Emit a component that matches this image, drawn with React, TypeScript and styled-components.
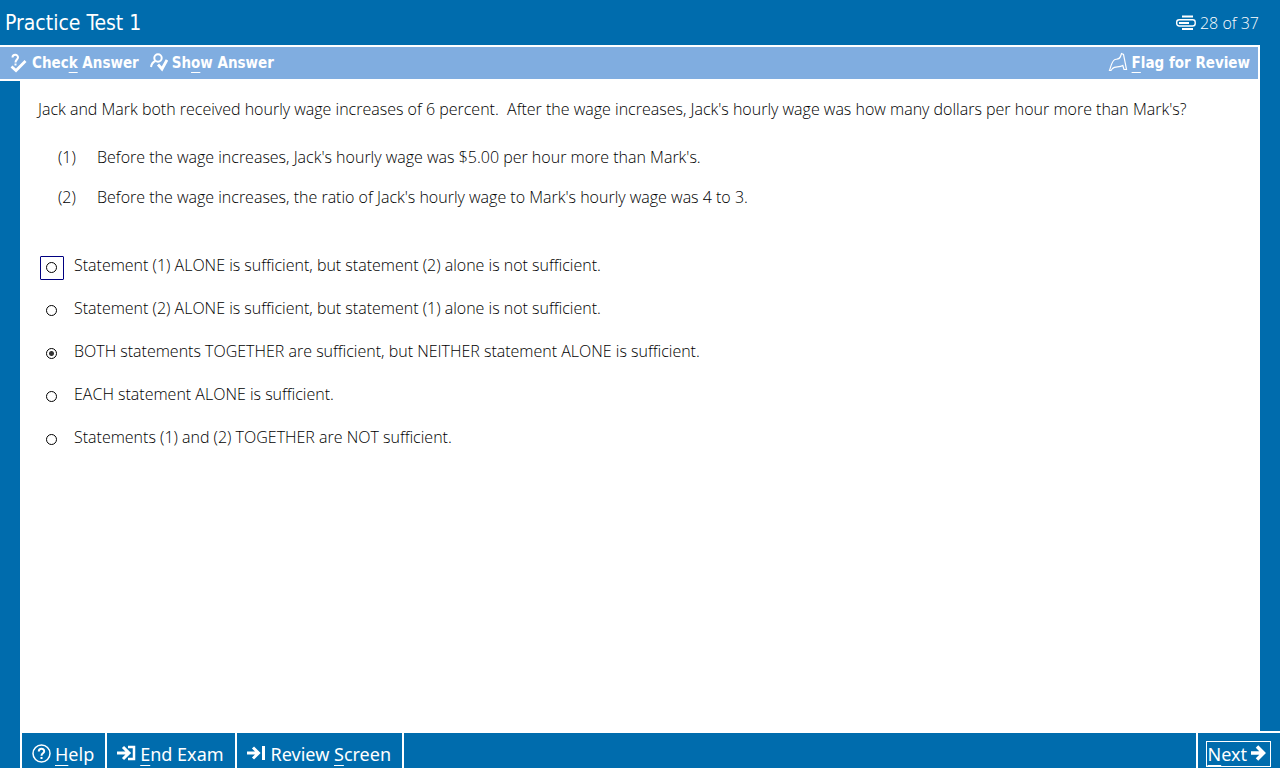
import React, { useState } from "react";
import styled, { createGlobalStyle } from "styled-components";

const blue = "#006cad";
const pale = "#80ade0";
const uiFont = '"DejaVu Sans Condensed", "DejaVu Sans", sans-serif';

const GlobalStyle = createGlobalStyle`
  * { box-sizing: border-box; }
  body { margin: 0; background: ${blue}; }
  button { color: inherit; background: none; border: 0; padding: 0; cursor: pointer; }
`;

const Page = styled.div`
  min-height: 100vh;
  display: flex;
  flex-direction: column;
  background: ${blue};
  color: #fff;
`;

const Header = styled.header`
  height: 45px;
  padding: 0 21px 0 5px;
  display: flex;
  align-items: center;
  justify-content: space-between;
`;

const Title = styled.h1`
  margin: 0;
  font: 400 21px/24px ${uiFont};
`;

const Progress = styled.div`
  display: flex;
  align-items: center;
  gap: 4px;
  font: 300 16px/20px "Open Sans", sans-serif;
`;

const Toolbar = styled.div`
  height: 36px;
  margin-right: 20px;
  padding: 0 8px 0 10px;
  display: flex;
  align-items: center;
  gap: 11px;
  background: ${pale};
  border: solid #fff;
  border-width: 2px 2px 2px 0;
`;

const ToolButton = styled.button<{ $end?: boolean }>`
  display: flex;
  align-items: center;
  gap: 4px;
  margin-left: ${(p) => (p.$end ? "auto" : "0")};
  font: 700 15px/20px ${uiFont};
`;

const Key = styled.span`
  text-decoration: underline;
  text-decoration-thickness: 1px;
  text-underline-offset: 4px;
  text-decoration-skip-ink: none;
`;

const Content = styled.main`
  flex: 1;
  margin: 0 20px;
  padding: 16px 18px;
  background: #fff;
  color: #000;
  font: 300 16px/24px "Open Sans", sans-serif;
`;

const Question = styled.p`
  margin: 0 0 24px;
  white-space: pre-wrap;
`;

const Statements = styled.ol`
  list-style: none;
  margin: 0 0 44px;
  padding: 0 0 0 20px;
  display: grid;
  gap: 16px;
`;

const Statement = styled.li`
  display: grid;
  grid-template-columns: 39px 1fr;
`;

const Choices = styled.fieldset`
  margin: 0;
  padding: 0 0 0 2px;
  border: 0;
  display: grid;
  gap: 19px;
`;

const Choice = styled.label`
  display: flex;
  align-items: center;
  gap: 10px;
`;

const RadioFrame = styled.span<{ $active: boolean }>`
  display: flex;
  width: 24px;
  height: 24px;
  margin-top: 3px;
  margin-bottom: -3px;
  padding: 5px;
  border: 1px solid ${(p) => (p.$active ? "#000080" : "transparent")};
  border-radius: 1px;
`;

const Radio = styled.input`
  appearance: none;
  width: 11px;
  height: 11px;
  margin: 0;
  border: 1px solid #000;
  border-radius: 50%;
  outline: none;
  &:checked { background: radial-gradient(circle, #333 0 2px, #fff 3px); }
`;

const Footer = styled.footer`
  height: 37px;
  margin-left: 20px;
  display: flex;
  border: solid #fff;
  border-width: 2px 0 0 2px;
  font: 400 18px/24px "Noto Sans", sans-serif;
`;

const FooterButton = styled.button`
  display: flex;
  align-items: center;
  gap: 4px;
  padding: 6px 11px 0 10px;
  border-right: 2px solid #fff;
  font: inherit;
`;

const NextCell = styled.div`
  margin-left: auto;
  padding: 8px 9px 0 8px;
  border-left: 2px solid #fff;
`;

const NextButton = styled.button`
  height: 26px;
  display: flex;
  align-items: center;
  gap: 4px;
  padding: 0 3px 0 1px;
  border: 1px solid #fff;
  font: inherit;
`;

const Icon = ({ w, h, sw = 2, children }: { w: number; h: number; sw?: number; children: React.ReactNode }) => (
  <svg width={w} height={h} viewBox={`0 0 ${w} ${h}`} fill="none" stroke="currentColor" strokeWidth={sw} aria-hidden="true">
    {children}
  </svg>
);

const options = [
  "Statement (1) ALONE is sufficient, but statement (2) alone is not sufficient.",
  "Statement (2) ALONE is sufficient, but statement (1) alone is not sufficient.",
  "BOTH statements TOGETHER are sufficient, but NEITHER statement ALONE is sufficient.",
  "EACH statement ALONE is sufficient.",
  "Statements (1) and (2) TOGETHER are NOT sufficient.",
];

export default function App() {
  const [selected, setSelected] = useState(2);
  const [active, setActive] = useState(0);
  return (
    <Page>
      <GlobalStyle />
      <Header>
        <Title>Practice Test 1</Title>
        <Progress>
          <Icon w={20} h={16}>
            <path d="M6 1.5H17M6 14H17" />
            <rect x="0.7" y="4.700" width="18.500" height="6.300" rx="2.5" strokeWidth="1.4" />
            <path d="M3 8H13" />
          </Icon>
          28 of 37
        </Progress>
      </Header>
      <Toolbar>
        <ToolButton type="button">
          <Icon w={18} h={20}>
            <path d="M2.5 4.500C2.500 1 8 1 8 4.300C8 6.500 5.500 6.500 5.500 9.500" />
            <path d="M5.500 10.500V12.500" />
            <path d="M1.500 13.500L6 17.500L15.500 8" strokeWidth="2.800" />
          </Icon>
          <span>Chec<Key>k</Key> Answer</span>
        </ToolButton>
        <ToolButton type="button">
          <Icon w={18} h={20}>
            <circle cx="8" cy="5" r="3.700" />
            <path d="M1 14C1.500 10.500 3 9 5.500 8" />
            <path d="M8 11.500L12 16L17 7" strokeWidth="2.800" />
          </Icon>
          <span>Sh<Key>o</Key>w Answer</span>
        </ToolButton>
        <ToolButton type="button" $end>
          <Icon w={20} h={22} sw={1.2}>
            <path d="M1.500 18.500C3 14 4 8.500 7 7.500C9.500 7 11.500 7.500 12.500 4.500L13.500 1.500L15.500 2.500L18.500 17.500H16L14.800 13.500C11 16 7 13.500 4.500 16.500L3 18.500Z" />
          </Icon>
          <span><Key>F</Key>lag for Review</span>
        </ToolButton>
      </Toolbar>
      <Content>
        <Question>
          {"Jack and Mark both received hourly wage increases of 6 percent.  After the wage increases, Jack's hourly wage was how many dollars per hour more than Mark's?"}
        </Question>
        <Statements>
          <Statement><span>(1)</span><span>Before the wage increases, Jack's hourly wage was $5.00 per hour more than Mark's.</span></Statement>
          <Statement><span>(2)</span><span>Before the wage increases, the ratio of Jack's hourly wage to Mark's hourly wage was 4 to 3.</span></Statement>
        </Statements>
        <Choices aria-label="Answer choices">
          {options.map((text, i) => (
            <Choice key={text}>
              <RadioFrame $active={active === i}>
                <Radio
                  type="radio"
                  name="answer"
                  checked={selected === i}
                  onFocus={() => setActive(i)}
                  onChange={() => setSelected(i)}
                />
              </RadioFrame>
              {text}
            </Choice>
          ))}
        </Choices>
      </Content>
      <Footer>
        <FooterButton type="button">
          <Icon w={19} h={20}>
            <circle cx="9.500" cy="9.500" r="8.500" strokeWidth="1.500" />
            <path d="M6.800 7.500C6.800 4 12.200 4 12.200 7.200C12.200 9.500 9.500 9 9.500 11.700M9.500 13V15" />
          </Icon>
          <span><Key>H</Key>elp</span>
        </FooterButton>
        <FooterButton type="button">
          <Icon w={19} h={20} sw={3}>
            <path d="M0 9H12M6 3L12 9L6 15" />
            <path d="M11 3H17V15H11" strokeWidth="2.5" />
          </Icon>
          <span><Key>E</Key>nd Exam</span>
        </FooterButton>
        <FooterButton type="button">
          <Icon w={20} h={20} sw={3}>
            <path d="M0 9H11M6 3.500L11.500 9L6 14.500M16.500 2V16" />
          </Icon>
          <span>Review <Key>S</Key>creen</span>
        </FooterButton>
        <NextCell>
          <NextButton type="button">
            <span><Key>N</Key>ext</span>
            <Icon w={16} h={18} sw={3.5}>
              <path d="M0 8H13M6 1.500L12.500 8L6 14.500" />
            </Icon>
          </NextButton>
        </NextCell>
      </Footer>
    </Page>
  );
}
